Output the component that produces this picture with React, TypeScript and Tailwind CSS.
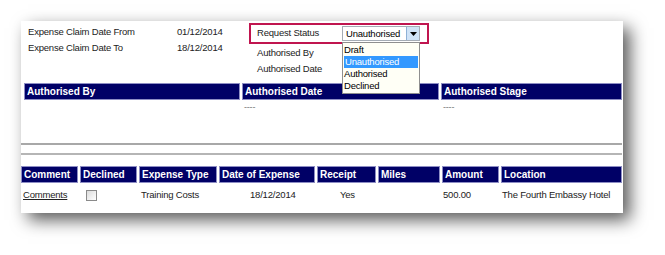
const font = "font-['Liberation_Sans',Arial,sans-serif]";

const authCols = ["Authorised By", "Authorised Date", "Authorised Stage"];
const expenseCols = [
  "Comment",
  "Declined",
  "Expense Type",
  "Date of Expense",
  "Receipt",
  "Miles",
  "Amount",
  "Location",
];

const HeadCell = ({ label }: { label: string }) => (
  <div className="bg-[#000066] border border-[#8d8dc4] px-[2px] h-[17px] flex items-center text-white font-bold text-[10px] tracking-normal leading-none whitespace-nowrap overflow-hidden">
    {label}
  </div>
);

const StatusSelect = () => {
  const options = ["Draft", "Unauthorised", "Authorised", "Declined"];
  return (
    <div className="relative w-[78px] h-[15px]">
      <div className="flex h-full border border-[#a5acb5] bg-white">
        <span className="flex-1 pl-[3px] leading-[13px] text-black">Unauthorised</span>
        <span className="w-[13px] h-full bg-[#cfe3f7] border-l border-[#8eb1d6] flex items-center justify-center">
          <svg width="7" height="4" viewBox="0 0 7 4">
            <path d="M0 0h7L3.5 4z" fill="#000" />
          </svg>
        </span>
      </div>
      <div className="absolute left-0 top-[16px] w-[78px] bg-[#fffff6] border border-[#8f8f8f] z-10 py-[1px]">
        {options.map((o) => (
          <div
            key={o}
            className={`px-[1px] h-[12px] leading-[12px] ${
              o === "Unauthorised" ? "bg-[#3399ff] text-white mx-[1px]" : "text-black"
            }`}
          >
            {o}
          </div>
        ))}
      </div>
    </div>
  );
};

export default function App() {
  return (
    <div className={`w-[665px] h-[255px] bg-white pt-[21px] pl-[21px] ${font}`}>
      <div className="w-[602px] h-[192px] bg-white shadow-[7px_7px_16px_rgba(0,0,0,0.65)] text-[#222] text-[9.5px] tracking-[-0.2px]">
        {/* filter block */}
        <div className="flex h-[62px]">
          <div className="pl-[7px] pt-[3px] w-[228px]">
            <div className="flex h-[16px] items-center">
              <span className="w-[149px]">Expense Claim Date From</span>
              <span>01/12/2014</span>
            </div>
            <div className="flex h-[16px] items-center">
              <span className="w-[149px]">Expense Claim Date To</span>
              <span>18/12/2014</span>
            </div>
          </div>
          <div className="pt-[2px]">
            <div className="w-[180px] h-[21px] border-[2.5px] border-[#c0154f] flex items-center pl-[6px]">
              <span className="w-[85px]">Request Status</span>
              <StatusSelect />
            </div>
            <div className="pl-[8px] pt-[1px]">
              <div className="h-[16px] flex items-center">Authorised By</div>
              <div className="h-[16px] flex items-center">Authorised Date</div>
            </div>
          </div>
        </div>

        {/* authorisation table */}
        <div className="grid grid-cols-[216px_197px_1fr] gap-[2px] pl-[3px] pr-[1px]">
          {authCols.map((c) => (
            <HeadCell key={c} label={c} />
          ))}
        </div>
        <div className="grid grid-cols-[216px_197px_1fr] gap-[2px] pl-[3px] pr-[1px] h-[43px] text-[#777] text-[9px]">
          <span />
          <span className="pl-[2px] pt-[3px] leading-none">----</span>
          <span className="pl-[2px] pt-[3px] leading-none">----</span>
        </div>

        <div className="h-[2px] bg-[#a8a8a8] mr-[1px]" />
        <div className="h-[8px]" />
        <div className="h-[2px] bg-[#b5b5b5] mr-[1px]" />
        <div className="h-[11px]" />

        {/* expense table */}
        <div className="grid grid-cols-[57px_57px_78px_96px_59px_62px_57px_1fr] gap-[2px] pr-[1px]">
          {expenseCols.map((c) => (
            <HeadCell key={c} label={c} />
          ))}
        </div>
        <div className="grid grid-cols-[57px_57px_78px_96px_59px_62px_57px_1fr] gap-[2px] pr-[1px] h-[24px] items-center text-[#222]">
          <span className="pl-[2px] underline">Comments</span>
          <span className="pl-[6px] flex">
            <span className="w-[11px] h-[11px] border border-[#8a8a8a] bg-gradient-to-br from-[#dcdcdc] to-white" />
          </span>
          <span className="pl-[2px]">Training Costs</span>
          <span className="pl-[31px]">18/12/2014</span>
          <span className="pl-[23px]">Yes</span>
          <span />
          <span className="pl-[1px]">500.00</span>
          <span className="pl-[1px] whitespace-nowrap">The Fourth Embassy Hotel</span>
        </div>
      </div>
    </div>
  );
}
